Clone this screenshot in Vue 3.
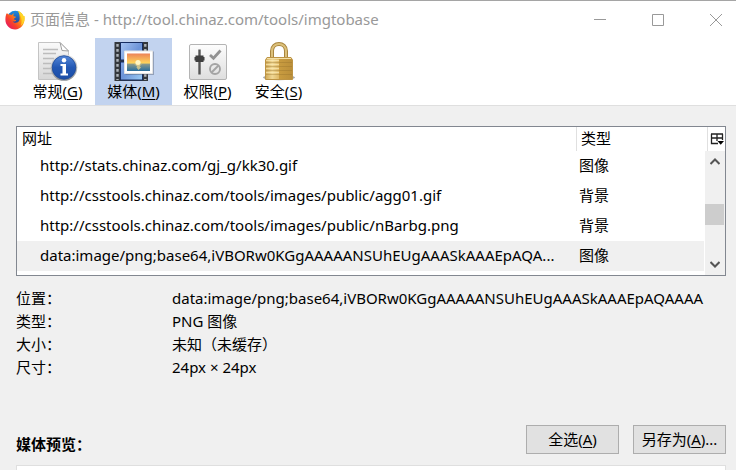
<script setup>
import { ref } from 'vue'

const tabs = [
  { id: 'general', label: '常规', key: 'G' },
  { id: 'media', label: '媒体', key: 'M' },
  { id: 'perm', label: '权限', key: 'P' },
  { id: 'security', label: '安全', key: 'S' },
]
const activeTab = ref('media')

const rows = [
  { url: 'http://stats.chinaz.com/gj_g/kk30.gif', type: '图像' },
  { url: 'http://csstools.chinaz.com/tools/images/public/agg01.gif', type: '背景' },
  { url: 'http://csstools.chinaz.com/tools/images/public/nBarbg.png', type: '背景' },
  { url: 'data:image/png;base64,iVBORw0KGgAAAAANSUhEUgAAASkAAAEpAQA...', type: '图像' },
]
const selected = ref(3)

const details = [
  { label: '位置：', value: 'data:image/png;base64,iVBORw0KGgAAAAANSUhEUgAAASkAAAEpAQAAAA' },
  { label: '类型：', value: 'PNG 图像' },
  { label: '大小：', value: '未知（未缓存）' },
  { label: '尺寸：', value: '24px × 24px' },
]
</script>

<template>
  <div class="window">
    <header class="titlebar">
      <svg class="logo" viewBox="0 0 20 20" aria-hidden="true">
        <defs>
          <linearGradient id="fox" x1="1" y1="0" x2="0.1" y2="0.8">
            <stop offset="0" stop-color="#ffe226" />
            <stop offset="0.4" stop-color="#ff9a0e" />
            <stop offset="0.75" stop-color="#f7402c" />
            <stop offset="1" stop-color="#e8205a" />
          </linearGradient>
          <linearGradient id="globe" x1="0" y1="0" x2="0" y2="1">
            <stop offset="0" stop-color="#1c8ee0" />
            <stop offset="1" stop-color="#2a2a86" />
          </linearGradient>
        </defs>
        <circle cx="10.300" cy="9" r="8.300" fill="url(#globe)" />
        <path d="M1.500 3.500C2.500 3.200 3.200 4 3.800 4.600C5 4.300 6 4.500 6.800 5C7.200 4.200 8.200 3.500 9.200 3.400C8.400 4.300 8.200 5.300 8.600 6.200L11 6.800C10.800 7.800 9.200 8.200 8.600 9.200C9.200 9.700 10.300 9.600 11.300 10.200C10.500 11.600 9 11.600 7.600 11.400C9.300 13.400 13.400 13.200 14.400 10.200C15 8 14.400 5.500 14.200 3.800C13.900 2.700 13.500 1.800 12.800 .8C15.500 1.700 17.600 3.800 18.600 6.200L19.400 6C20.800 12.500 16.500 19.500 10.200 19.500C4.400 19.500 .4 15 .4 9.800C.4 7.300 .8 5 1.500 3.500Z" fill="url(#fox)" />
        <path d="M12.800 .8C15.500 1.700 17.600 3.800 18.600 6.200L19.400 6C20.300 10.500 18.500 14 15.800 15.800C17.200 12 16.800 6.500 14.200 3.800C13.900 2.700 13.500 1.800 12.800 .8Z" fill="#ffdd2b" opacity=".8" />
      </svg>
      <h1 class="title">页面信息 - http://tool.chinaz.com/tools/imgtobase</h1>
      <div class="controls">
        <button type="button" aria-label="最小化">
          <svg viewBox="0 0 12 12"><path d="M0 5.500H12" /></svg>
        </button>
        <button type="button" aria-label="最大化">
          <svg viewBox="0 0 12 12"><path d="M.5 .5H11.500V11.500H.5Z" /></svg>
        </button>
        <button type="button" aria-label="关闭">
          <svg viewBox="0 0 12 12"><path d="M0 0L12 12M12 0L0 12" /></svg>
        </button>
      </div>
    </header>

    <nav class="toolbar">
      <button
        v-for="tab in tabs"
        :key="tab.id"
        type="button"
        class="tab"
        :class="{ active: tab.id === activeTab }"
        @click="activeTab = tab.id"
      >
        <svg v-if="tab.id === 'general'" class="icon" viewBox="0 0 40 40" aria-hidden="true">
          <defs>
            <linearGradient id="paper" x1="0" y1="0" x2="0" y2="1">
              <stop offset="0" stop-color="#fafafa" /><stop offset="1" stop-color="#d6d6d6" />
            </linearGradient>
            <linearGradient id="info" x1="0" y1="0" x2="0" y2="1">
              <stop offset="0" stop-color="#5487d8" /><stop offset=".5" stop-color="#2358b4" /><stop offset="1" stop-color="#1c4ea8" />
            </linearGradient>
            <linearGradient id="ring" x1="0" y1="0" x2="0" y2="1">
              <stop offset="0" stop-color="#e6e6e6" /><stop offset="1" stop-color="#8b8f94" />
            </linearGradient>
          </defs>
          <path d="M.5 1.500H22L30.500 10V38.500H.5Z" fill="url(#paper)" stroke="#c4c4c4" />
          <path d="M22 1.500L24 9.500L30.500 10Z" fill="#fff" stroke="#a0a0a0" />
          <path d="M5 8.500H20M5 12.500H18M5 17.500H16M5 22.500H13M5 27.500H13M5 32.500H15" stroke="#bcbcbc" stroke-width="1.500" />
          <circle cx="26" cy="26.500" r="13.300" fill="url(#ring)" />
          <circle cx="26" cy="26.500" r="11.800" fill="url(#info)" stroke="#1c4796" stroke-width=".8" />
          <circle cx="26" cy="19.300" r="2.200" fill="#fff" />
          <path d="M22.500 23H28V32.500H30V34.500H22.500V32.500H24.500V25H22.500Z" fill="#fff" />
        </svg>
        <svg v-else-if="tab.id === 'media'" class="icon" viewBox="0 0 40 40" aria-hidden="true">
          <defs>
            <linearGradient id="film" x1="0" y1="0" x2="1" y2="1">
              <stop offset="0" stop-color="#a7c4f2" /><stop offset=".5" stop-color="#6c93d8" /><stop offset="1" stop-color="#9ccdf4" />
            </linearGradient>
            <linearGradient id="sunset" x1="0" y1="0" x2="0" y2="1">
              <stop offset="0" stop-color="#ec8358" /><stop offset=".55" stop-color="#ffd55a" />
              <stop offset=".6" stop-color="#8a9a8c" /><stop offset="1" stop-color="#286e9c" />
            </linearGradient>
          </defs>
          <path d="M.5 1H34V40H.5Z" fill="#34383c" />
          <path d="M6.500 1.500H28.500V19H6.500ZM6.500 21H28.500V39H6.500Z" fill="url(#film)" stroke="#172d62" />
          <path d="M3.500 3V39M31.300 3V39" stroke="#aeb4ba" stroke-width="2.400" stroke-dasharray="2.800 2.200" />
          <path d="M11.500 10.500H40V34H11.500Z" fill="#4b5568" opacity=".4" />
          <path d="M10.500 10H38.500V32.500H10.500Z" fill="#fff" stroke="#e4e4e4" />
          <path d="M13 12.500H36V30H13Z" fill="url(#sunset)" />
          <circle cx="24" cy="21.500" r="2.600" fill="#fff7c5" />
          <path d="M20 23.500H28L25.500 25L27 26.500L24.500 29L22.500 26.500L23 25Z" fill="#ffe08a" opacity=".65" />
        </svg>
        <svg v-else-if="tab.id === 'perm'" class="icon" viewBox="0 0 40 40" aria-hidden="true">
          <defs>
            <linearGradient id="plate" x1="0" y1="0" x2="0" y2="1">
              <stop offset="0" stop-color="#fdfdfd" /><stop offset="1" stop-color="#dedede" />
            </linearGradient>
          </defs>
          <rect x="1.500" y="3.500" width="37" height="35" rx="1.500" fill="url(#plate)" stroke="#b4b4b4" />
          <path d="M11.500 8.500V33.500" stroke="#555" stroke-width="2.400" />
          <path d="M7.500 14.500H15.500V16H16.500V19.500H15.500V21H7.500V19.500H6.500V16H7.500Z" fill="#3f3f3f" />
          <path d="M22 14L25.500 17.300L32.500 9.500" fill="none" stroke="#929292" stroke-width="2.800" />
          <circle cx="27" cy="28" r="5" fill="none" stroke="#a4a4a4" stroke-width="1.900" />
          <path d="M23.500 31.500L30.500 24.500" stroke="#a4a4a4" stroke-width="1.900" />
        </svg>
        <svg v-else class="icon" viewBox="0 0 40 40" aria-hidden="true">
          <defs>
            <linearGradient id="brass" x1="0" y1="0" x2="1" y2="0">
              <stop offset="0" stop-color="#d2aa58" /><stop offset=".25" stop-color="#efd794" />
              <stop offset=".49" stop-color="#dfba68" /><stop offset=".5" stop-color="#c99c40" /><stop offset="1" stop-color="#bb8f3a" />
            </linearGradient>
          </defs>
          <ellipse cx="20" cy="36.500" rx="16" ry="2.800" fill="#6d7075" opacity=".6" />
          <path d="M13 18V10C13 .5 27 .5 27 10V18" fill="none" stroke="#a8853e" stroke-width="4" />
          <path d="M13 18V10C13 .5 27 .5 27 10V18" fill="none" stroke="#dcc07a" stroke-width="2" />
          <path d="M8 16.500H32L33.500 19V38.500H6.500V19Z" fill="url(#brass)" stroke="#bd9444" />
          <path d="M7 21.500H33M7 25.500H33M7 29.500H33M7 33.500H33" stroke="#94702a" opacity=".35" />
          <path d="M8 17.500H32" stroke="#f3e0a8" />
          <path d="M7 19.500H20M7 23.500H20M7 27.500H20M7 31.500H20" stroke="#fff0bd" opacity=".6" />
        </svg>
        <span>{{ tab.label }}(<u>{{ tab.key }}</u>)</span>
      </button>
    </nav>

    <main class="panel">
      <section class="tree">
        <table>
          <thead>
            <tr><th class="url" scope="col">网址</th><th class="type" scope="col">类型</th></tr>
          </thead>
          <tbody>
            <tr v-for="(row, i) in rows" :key="row.url" :class="{ selected: i === selected }" @click="selected = i">
              <td class="url">{{ row.url }}</td>
              <td class="type">{{ row.type }}</td>
            </tr>
          </tbody>
        </table>
        <div class="side">
          <button type="button" class="picker" aria-label="选择要显示的列">
            <svg viewBox="0 0 14 14">
              <path d="M1 2H13M1.500 2V11.500H8M1 6H12.500M7 2V9M12.500 2V8" fill="none" stroke="#222" stroke-width="1.300" />
              <path d="M7.500 9H14L10.700 12.800Z" fill="#000" />
            </svg>
          </button>
          <div class="scrollbar">
            <button type="button" aria-label="向上滚动">
              <svg viewBox="0 0 10 7"><path d="M.5 6L5 1.500L9.500 6" /></svg>
            </button>
            <div class="track"><div class="thumb"></div></div>
            <button type="button" aria-label="向下滚动">
              <svg viewBox="0 0 10 7"><path d="M.5 1L5 5.500L9.500 1" /></svg>
            </button>
          </div>
        </div>
      </section>

      <dl class="details">
        <template v-for="item in details" :key="item.label">
          <dt>{{ item.label }}</dt>
          <dd>{{ item.value }}</dd>
        </template>
      </dl>

      <div class="actions">
        <h2>媒体预览：</h2>
        <button type="button">全选(<u>A</u>)</button>
        <button type="button">另存为(<u>A</u>)...</button>
      </div>
      <div class="preview"></div>
    </main>
  </div>
</template>

<style>
body {
  background: #f0f0f0;
  overflow: hidden;
}
</style>

<style scoped>
.window {
  display: flex;
  flex-direction: column;
  height: 100vh;
  box-sizing: border-box;
  border-top: 1px solid #a5a5a5;
  color: #000;
  font: 15px/20px "Noto Sans", "Noto Sans CJK SC", sans-serif;
}
button {
  padding: 0;
  border: 0;
  background: none;
  color: inherit;
  font: inherit;
}
u {
  text-underline-offset: 2px;
}
.titlebar {
  display: flex;
  align-items: center;
  height: 37px;
  flex: none;
  background: #fff;
}
.logo {
  width: 20px;
  height: 20px;
  margin: 0 5px;
}
.title {
  flex: 1;
  margin: 0;
  padding-bottom: 2px;
  color: #999;
  font-size: 15px;
  font-weight: 400;
  white-space: nowrap;
}
.controls {
  display: flex;
  gap: 18px;
}
.controls button {
  display: grid;
  place-items: center;
  width: 40px;
  height: 36px;
}
.controls svg {
  width: 12px;
  height: 12px;
  fill: none;
  stroke: #999;
}
.toolbar {
  display: flex;
  flex: none;
  padding-left: 20px;
  background: #fff;
  border-bottom: 1px solid #dfdfdf;
}
.tab {
  display: flex;
  flex-direction: column;
  align-items: center;
  min-width: 71px;
  height: 67px;
  padding-top: 3px;
  box-sizing: border-box;
}
.tab:first-child {
  min-width: 75px;
}
.tab.active {
  min-width: 77px;
  background: #c2d3ef;
}
.icon {
  width: 40px;
  height: 40px;
}
.panel {
  display: flex;
  flex: 1;
  flex-direction: column;
  min-height: 0;
  padding: 20px 10px 0 16px;
}
.tree {
  display: flex;
  flex: none;
  padding-bottom: 4px;
  border: 1px solid #828790;
  background: #fff;
}
table {
  flex: 1;
  min-width: 0;
  table-layout: fixed;
  border-collapse: collapse;
}
th,
td {
  overflow: hidden;
  padding: 0 0 2px 3px;
  font-weight: 400;
  text-align: left;
  white-space: nowrap;
}
th {
  height: 22px;
}
td {
  height: 28px;
}
th.url {
  padding-left: 5px;
}
td.url {
  padding-left: 23px;
}
.type {
  width: 123px;
}
th.type {
  padding-left: 5px;
  box-shadow: inset 1px 0 #e0e0e0;
}
.selected {
  background: #f0f0f0;
}
.side {
  display: flex;
  flex-direction: column;
  width: 21px;
  margin-bottom: -4px;
}
.picker {
  display: grid;
  place-items: center;
  height: 24px;
  margin-left: 3px;
  border-left: 1px solid #e0e0e0;
}
.picker svg {
  width: 14px;
  height: 14px;
}
.scrollbar {
  display: flex;
  flex: 1;
  flex-direction: column;
  margin-left: 1px;
  background: #f0f0f0;
}
.scrollbar button {
  display: grid;
  place-items: center;
  height: 21px;
}
.scrollbar svg {
  width: 10px;
  height: 7px;
  fill: none;
  stroke: #555;
  stroke-width: 2;
}
.track {
  display: grid;
  flex: 1;
  grid-template-rows: 32fr 21fr 29fr;
}
.thumb {
  grid-row: 2;
  margin-right: 1px;
  background: #cdcdcd;
}
.details {
  display: grid;
  grid-template-columns: 156px 1fr;
  margin: 11px 0 0;
  line-height: 23px;
}
dt,
dd {
  margin: 0;
  white-space: nowrap;
}
.actions {
  display: flex;
  align-items: center;
  gap: 14px;
  margin-top: 46px;
}
.actions h2 {
  flex: 1;
  align-self: flex-end;
  margin: 0;
  font-size: 15px;
  line-height: 20px;
}
.actions button {
  width: 93px;
  height: 29px;
  padding-bottom: 2px;
  border: 1px solid #adadad;
  background: #e1e1e1;
  white-space: nowrap;
}
.preview {
  flex: 1;
  margin-top: 11px;
  border: 1px solid #dfdfdf;
  border-bottom: 0;
  background: #fff;
}
</style>
